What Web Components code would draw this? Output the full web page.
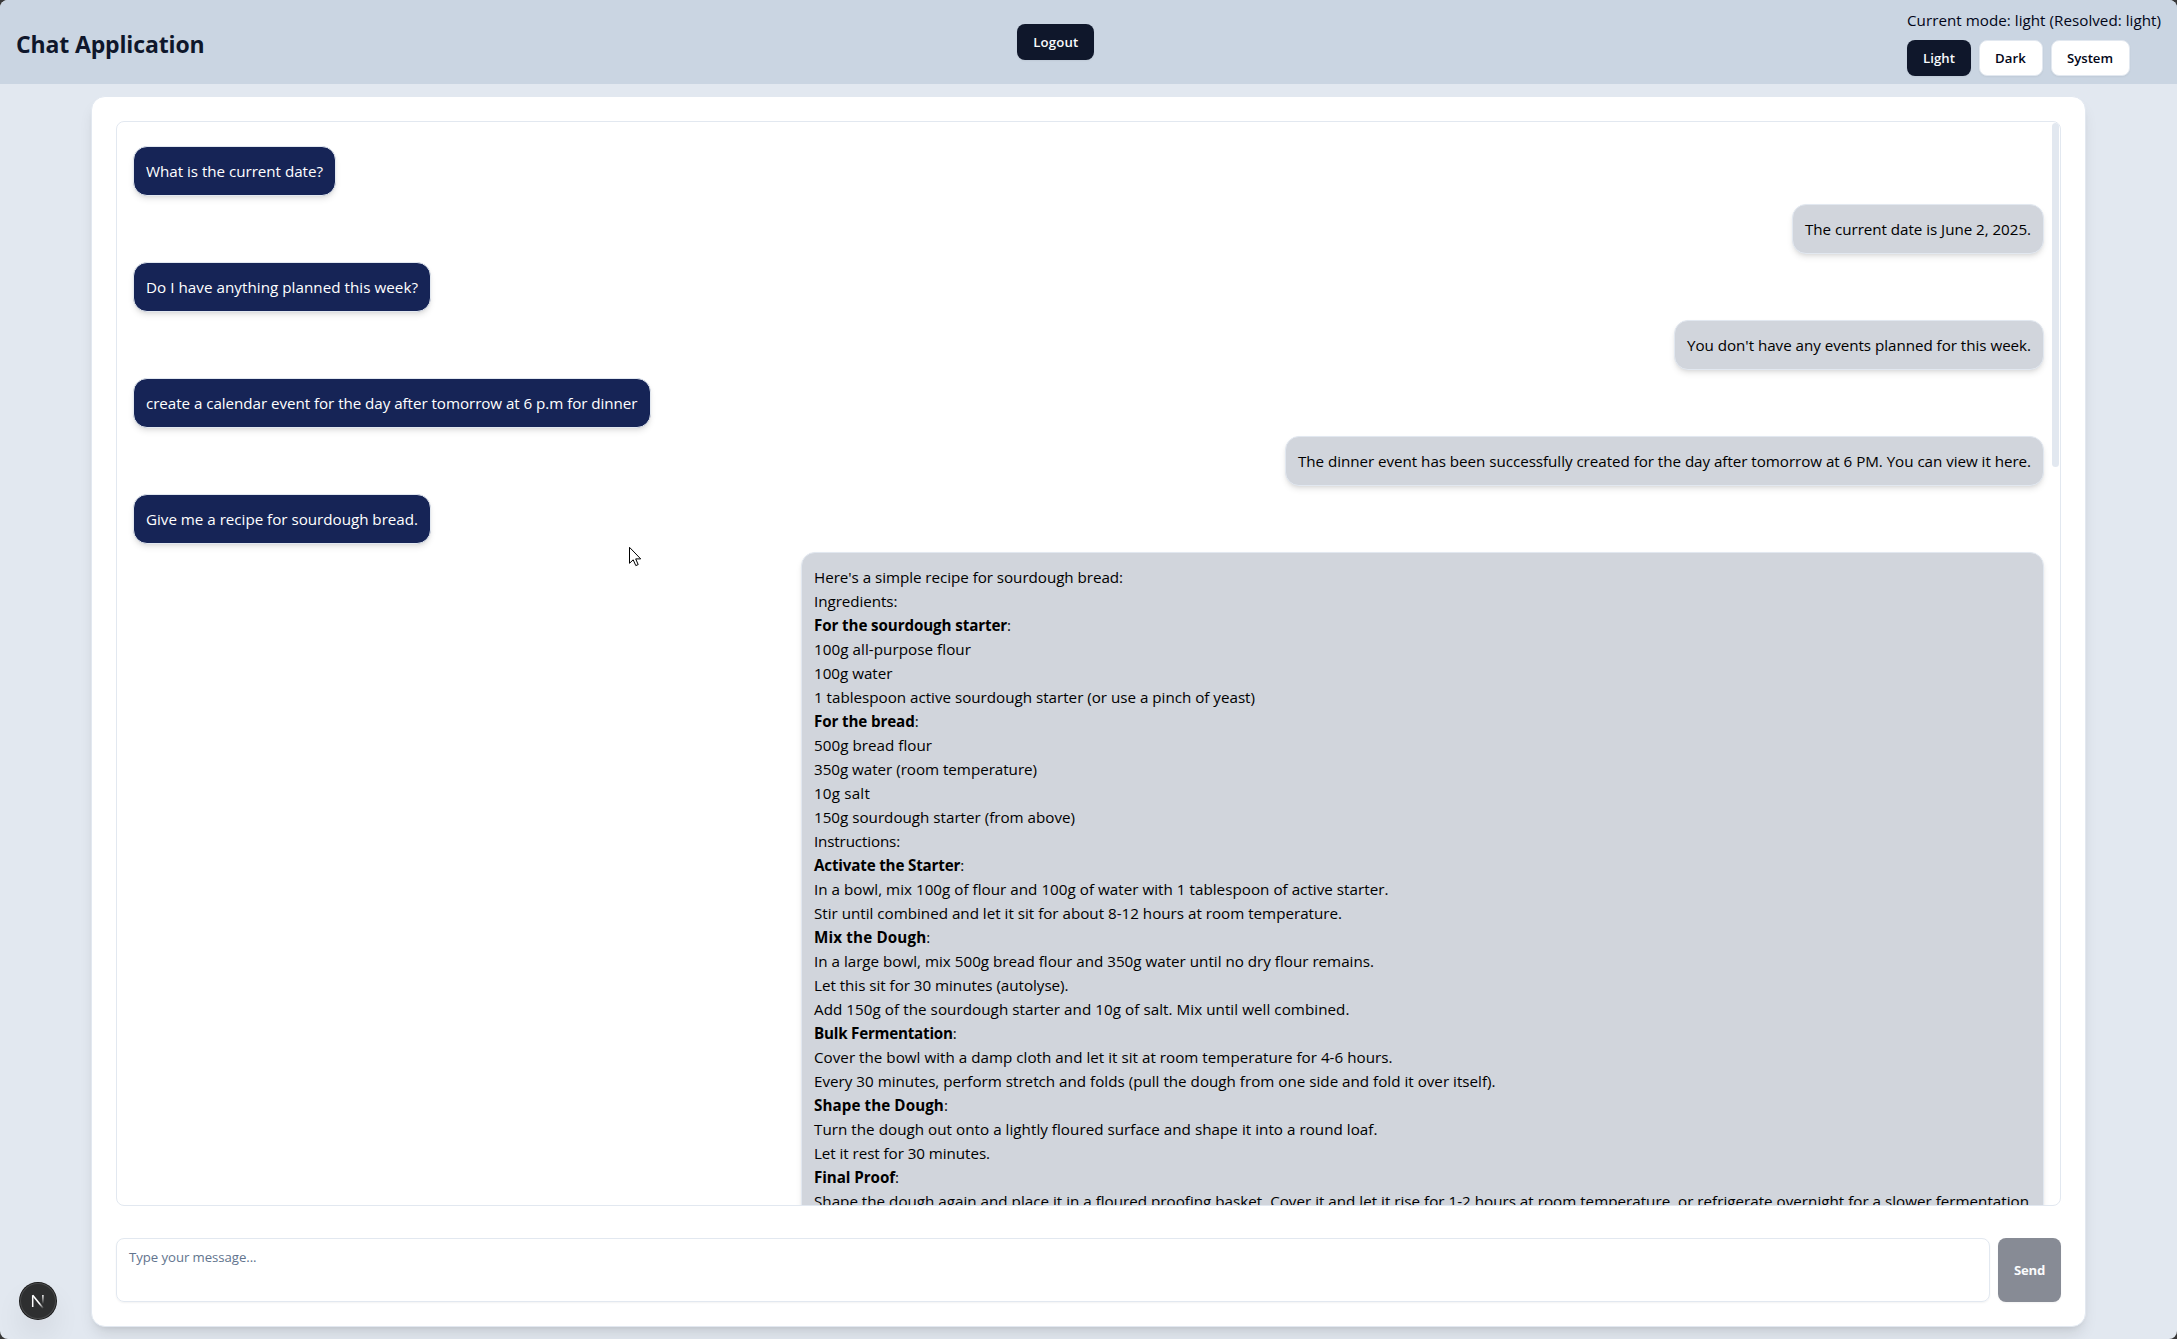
<!DOCTYPE html>
<html lang="en">
<head>
<meta charset="utf-8">
<title>Chat Application</title>
<style>
html,body{margin:0;height:100%;background:#383838;overflow:hidden}
body{font:15.2px/24px "Open Sans","Noto Sans",sans-serif;color:#020618}
</style>
</head>
<body>
<chat-app></chat-app>
<script>
const define = (name, html, ready) => {
  const t = document.createElement('template');
  t.innerHTML = html;
  customElements.define(name, class extends HTMLElement {
    constructor() {
      super();
      this.attachShadow({ mode: 'open' }).append(t.content.cloneNode(true));
    }
    connectedCallback() { if (ready) ready(this); }
  });
};

/* A single line of text tracked to an exact width. */
define('fit-text', `<style>
:host{display:block;white-space:nowrap}
span{display:inline-block;white-space:pre}
</style><span><slot></slot></span>`, el => {
  const w = parseFloat(el.getAttribute('w'));
  const span = el.shadowRoot.querySelector('span');
  el.style.width = w + 'px';
  const fit = () => {
    const n = el.textContent.length;
    span.style.letterSpacing = '0px';
    const natural = span.getBoundingClientRect().width;
    if (natural) span.style.letterSpacing = ((w - natural) / n).toFixed(4) + 'px';
  };
  requestAnimationFrame(fit);
  fit();
});

define('ui-button', `<style>
:host{display:flex;align-items:center;justify-content:center;box-sizing:border-box;height:36px;padding:0 16px;border-radius:8px;
 background:#0f172b;color:#f8fafc;font-size:13.2px;line-height:20px;font-weight:600;box-shadow:0 1px 2px rgba(0,0,0,.05)}
:host([outline]){background:#fff;color:#020618;border:1px solid #e2e8f0;padding:0 16px 0 15px}
:host([send]){height:64px;background:#878b95;color:#fafbfc;font-weight:700}
</style><slot></slot>`);

define('theme-switch', `<style>
:host{display:flex;flex-direction:column;gap:8px}
div{display:flex;gap:8px}
</style>
<fit-text w="254">Current mode: light (Resolved: light)</fit-text>
<div>
<ui-button><fit-text w="32">Light</fit-text></ui-button>
<ui-button outline><fit-text w="31">Dark</fit-text></ui-button>
<ui-button outline><fit-text w="46">System</fit-text></ui-button>
</div>`);

define('app-header', `<style>
:host{display:flex;align-items:center;justify-content:space-between;height:84px;box-sizing:border-box;padding:8px 16px;background:#cad5e2}
h1{margin:4px 0 0;font-size:23px;line-height:32px;font-weight:700;color:#0f172b}
</style>
<h1><fit-text w="188.5">Chat Application</fit-text></h1>
<ui-button><fit-text w="45">Logout</fit-text></ui-button>
<theme-switch></theme-switch>`);

define('chat-message', `<style>
:host{display:block;flex:none;box-sizing:border-box;padding:12px;border:1px solid #e2e8f0;border-radius:14px;
 box-shadow:0 4px 6px -1px rgba(0,0,0,.1),0 2px 4px -2px rgba(0,0,0,.1);
 background:#d1d5dc;color:#000;align-self:flex-end}
:host([user]){background:#162456;color:#fff;align-self:flex-start}
:host([long]){width:1243px}
</style><slot></slot>`);

define('scroll-thumb', `<style>
:host{display:block;position:absolute;top:1px;right:1px;width:7px;height:344px;border-radius:4px;background:#e2e8f0}
</style>`);

define('message-list', `<style>
:host{display:block;flex:1;min-height:0;box-sizing:border-box;border:1px solid #e2e8f0;border-radius:8px;overflow:hidden;position:relative}
.col{display:flex;flex-direction:column;gap:8px;padding:24px 16px}
b{font-weight:700}
</style>
<div class="col">
<chat-message user><fit-text w="177">What is the current date?</fit-text></chat-message>
<chat-message><fit-text w="226">The current date is June 2, 2025.</fit-text></chat-message>
<chat-message user><fit-text w="272">Do I have anything planned this week?</fit-text></chat-message>
<chat-message><fit-text w="344">You don't have any events planned for this week.</fit-text></chat-message>
<chat-message user><fit-text w="491.5">create a calendar event for the day after tomorrow at 6 p.m for dinner</fit-text></chat-message>
<chat-message><fit-text w="733">The dinner event has been successfully created for the day after tomorrow at 6 PM. You can view it here.</fit-text></chat-message>
<chat-message user><fit-text w="272">Give me a recipe for sourdough bread.</fit-text></chat-message>
<chat-message long>
<fit-text w="309">Here's a simple recipe for sourdough bread:</fit-text>
<fit-text w="83.5">Ingredients:</fit-text>
<fit-text w="197"><b>For the sourdough starter</b>:</fit-text>
<fit-text w="157">100g all-purpose flour</fit-text>
<fit-text w="78.5">100g water</fit-text>
<fit-text w="441">1 tablespoon active sourdough starter (or use a pinch of yeast)</fit-text>
<fit-text w="104.5"><b>For the bread</b>:</fit-text>
<fit-text w="118">500g bread flour</fit-text>
<fit-text w="223">350g water (room temperature)</fit-text>
<fit-text w="56">10g salt</fit-text>
<fit-text w="261">150g sourdough starter (from above)</fit-text>
<fit-text w="86">Instructions:</fit-text>
<fit-text w="150"><b>Activate the Starter</b>:</fit-text>
<fit-text w="574.5">In a bowl, mix 100g of flour and 100g of water with 1 tablespoon of active starter.</fit-text>
<fit-text w="528">Stir until combined and let it sit for about 8-12 hours at room temperature.</fit-text>
<fit-text w="116.5"><b>Mix the Dough</b>:</fit-text>
<fit-text w="560">In a large bowl, mix 500g bread flour and 350g water until no dry flour remains.</fit-text>
<fit-text w="254.5">Let this sit for 30 minutes (autolyse).</fit-text>
<fit-text w="535.5">Add 150g of the sourdough starter and 10g of salt. Mix until well combined.</fit-text>
<fit-text w="142.5"><b>Bulk Fermentation</b>:</fit-text>
<fit-text w="578.5">Cover the bowl with a damp cloth and let it sit at room temperature for 4-6 hours.</fit-text>
<fit-text w="681.5">Every 30 minutes, perform stretch and folds (pull the dough from one side and fold it over itself).</fit-text>
<fit-text w="134"><b>Shape the Dough</b>:</fit-text>
<fit-text w="563.5">Turn the dough out onto a lightly floured surface and shape it into a round loaf.</fit-text>
<fit-text w="176">Let it rest for 30 minutes.</fit-text>
<fit-text w="85"><b>Final Proof</b>:</fit-text>
<fit-text w="1215">Shape the dough again and place it in a floured proofing basket. Cover it and let it rise for 1-2 hours at room temperature, or refrigerate overnight for a slower fermentation</fit-text>
</chat-message>
</div>
<scroll-thumb></scroll-thumb>`);

define('message-composer', `<style>
:host{display:flex;gap:8px;flex:none}
.box{flex:1;box-sizing:border-box;height:64px;border:1px solid #e2e8f0;border-radius:8px;padding:8px 12px;
 font-size:13.2px;line-height:21px;color:#62748e;box-shadow:0 1px 2px rgba(0,0,0,.05)}
</style>
<div class="box"><fit-text w="127.5">Type your message...</fit-text></div>
<ui-button send><fit-text w="31">Send</fit-text></ui-button>`);

define('chat-panel', `<style>
:host{display:flex;flex-direction:column;gap:32px;flex:1;min-height:0;box-sizing:border-box;margin:12px 91px;padding:24px;
 border:1px solid #e2e8f0;border-radius:14px;background:#fff;
 box-shadow:0 10px 15px -3px rgba(0,0,0,.1),0 4px 6px -4px rgba(0,0,0,.1)}
</style>
<message-list></message-list>
<message-composer></message-composer>`);

define('dev-badge', `<style>
:host{display:flex;position:absolute;left:20px;bottom:20px;width:36px;height:36px;border-radius:50%;
 background:#2e2f30;box-shadow:0 0 0 1px #171717,inset 0 0 0 1px #48494a,0 16px 32px -8px rgba(0,0,0,.24)}
svg{margin:auto}
</style>
<svg width="14" height="16" viewBox="0 0 14 16" fill="none">
<defs><linearGradient id="d" x1="6" y1="7" x2="13" y2="15" gradientUnits="userSpaceOnUse"><stop offset=".4" stop-color="#fff"/><stop offset="1" stop-color="#fff" stop-opacity="0"/></linearGradient>
<linearGradient id="v" x1="0" y1="2" x2="0" y2="11" gradientUnits="userSpaceOnUse"><stop stop-color="#fff"/><stop offset="1" stop-color="#fff" stop-opacity="0"/></linearGradient></defs>
<path d="M1.7 14V2.3" stroke="#fff" stroke-width="1.5"/>
<path d="M1.7 2.3L12.2 15.2" stroke="url(#d)" stroke-width="1.6"/>
<path d="M11.9 2V11" stroke="url(#v)" stroke-width="1.5"/>
</svg>`);

define('mouse-pointer', `<style>
:host{display:block;position:absolute;left:628px;top:546px;width:14px;height:21px}
svg{display:block}
</style>
<svg width="14" height="21" viewBox="0 0 14 21"><path d="M1.5 1.3V17.3L5.2 13.8L7.8 19.6L10.2 18.6L7.7 12.9H12.7Z" fill="#fff" stroke="#000" stroke-width="1"/></svg>`);

define('chat-app', `<style>
:host{display:flex;flex-direction:column;position:relative;height:100vh;border-radius:8px;overflow:hidden;background:#e2e8f0}
</style>
<app-header></app-header>
<chat-panel></chat-panel>
<dev-badge></dev-badge>
<mouse-pointer></mouse-pointer>`);
</script>
</body>
</html>
